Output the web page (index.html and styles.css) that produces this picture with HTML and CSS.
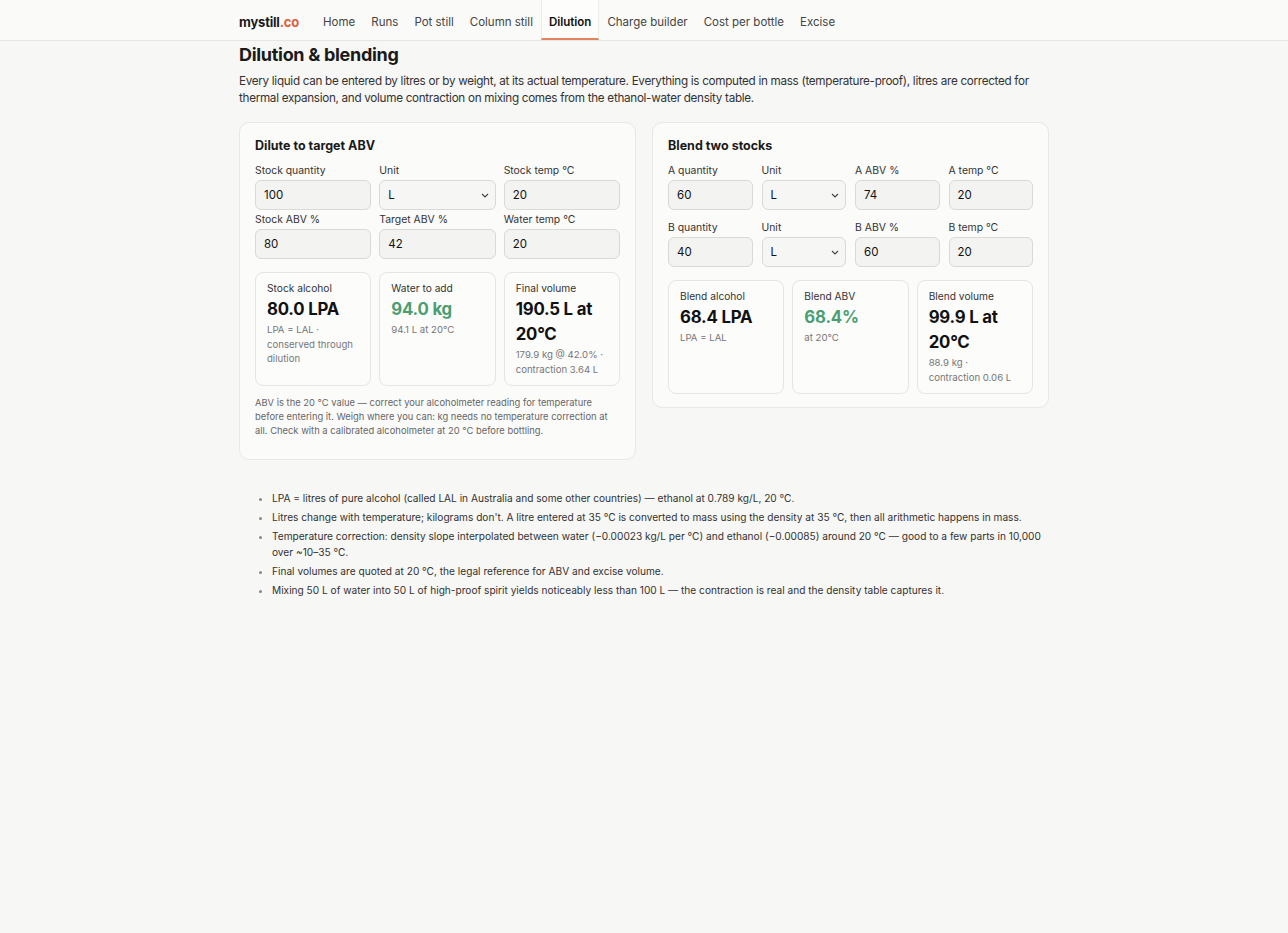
FILE: index.html
```html
<!DOCTYPE html>
<html lang="en">
<head>
  <meta charset="UTF-8" />
  <meta name="viewport" content="width=device-width, initial-scale=1.0" />
  <title>Dilution &amp; blending · mystill.co</title>
  <link rel="stylesheet" href="styles.css">
</head>
<body>
  <nav class="topbar">
    <div class="topbar-inner">
      <a class="logo" href="#">mystill<span>.co</span></a>
      <a class="nav-link" href="#">Home</a>
      <a class="nav-link" href="#">Runs</a>
      <a class="nav-link" href="#">Pot still</a>
      <a class="nav-link" href="#">Column still</a>
      <a class="nav-link active" href="#">Dilution</a>
      <a class="nav-link" href="#">Charge builder</a>
      <a class="nav-link" href="#">Cost per bottle</a>
      <a class="nav-link" href="#">Excise</a>
    </div>
  </nav>

  <main class="page">
    <h1>Dilution &amp; blending</h1>
    <p class="lead">Every liquid can be entered by litres or by weight, at its actual temperature. Everything is computed in mass (temperature-proof), litres are corrected for thermal expansion, and volume contraction on mixing comes from the ethanol-water density table.</p>

    <div class="panels">
      <section class="panel">
        <h2>Dilute to target ABV</h2>
        <div class="fields cols-3">
          <label class="field"><span>Stock quantity</span><input type="text" value="100"></label>
          <label class="field"><span>Unit</span><select><option>L</option><option>kg</option></select></label>
          <label class="field"><span>Stock temp °C</span><input type="text" value="20"></label>
          <label class="field"><span>Stock ABV %</span><input type="text" value="80"></label>
          <label class="field"><span>Target ABV %</span><input type="text" value="42"></label>
          <label class="field"><span>Water temp °C</span><input type="text" value="20"></label>
        </div>
        <div class="results">
          <div class="result">
            <div class="result-label">Stock alcohol</div>
            <div class="result-value">80.0 LPA</div>
            <div class="result-note">LPA = LAL · conserved through dilution</div>
          </div>
          <div class="result">
            <div class="result-label">Water to add</div>
            <div class="result-value good">94.0 kg</div>
            <div class="result-note">94.1 L at 20°C</div>
          </div>
          <div class="result">
            <div class="result-label">Final volume</div>
            <div class="result-value">190.5 L at 20°C</div>
            <div class="result-note">179.9 kg @ 42.0% · contraction 3.64 L</div>
          </div>
        </div>
        <p class="hint">ABV is the 20 °C value — correct your alcoholmeter reading for temperature before entering it. Weigh where you can: kg needs no temperature correction at all. Check with a calibrated alcoholmeter at 20 °C before bottling.</p>
      </section>

      <section class="panel">
        <h2>Blend two stocks</h2>
        <div class="fields cols-4">
          <label class="field"><span>A quantity</span><input type="text" value="60"></label>
          <label class="field"><span>Unit</span><select><option>L</option><option>kg</option></select></label>
          <label class="field"><span>A ABV %</span><input type="text" value="74"></label>
          <label class="field"><span>A temp °C</span><input type="text" value="20"></label>
        </div>
        <div class="fields cols-4">
          <label class="field"><span>B quantity</span><input type="text" value="40"></label>
          <label class="field"><span>Unit</span><select><option>L</option><option>kg</option></select></label>
          <label class="field"><span>B ABV %</span><input type="text" value="60"></label>
          <label class="field"><span>B temp °C</span><input type="text" value="20"></label>
        </div>
        <div class="results">
          <div class="result">
            <div class="result-label">Blend alcohol</div>
            <div class="result-value">68.4 LPA</div>
            <div class="result-note">LPA = LAL</div>
          </div>
          <div class="result">
            <div class="result-label">Blend ABV</div>
            <div class="result-value good">68.4%</div>
            <div class="result-note">at 20°C</div>
          </div>
          <div class="result">
            <div class="result-label">Blend volume</div>
            <div class="result-value">99.9 L at 20°C</div>
            <div class="result-note">88.9 kg · contraction 0.06 L</div>
          </div>
        </div>
      </section>
    </div>

    <ul class="notes">
      <li>LPA = litres of pure alcohol (called LAL in Australia and some other countries) — ethanol at 0.789 kg/L, 20 °C.</li>
      <li>Litres change with temperature; kilograms don't. A litre entered at 35 °C is converted to mass using the density at 35 °C, then all arithmetic happens in mass.</li>
      <li>Temperature correction: density slope interpolated between water (−0.00023 kg/L per °C) and ethanol (−0.00085) around 20 °C — good to a few parts in 10,000 over ~10–35 °C.</li>
      <li>Final volumes are quoted at 20 °C, the legal reference for ABV and excise volume.</li>
      <li>Mixing 50 L of water into 50 L of high-proof spirit yields noticeably less than 100 L — the contraction is real and the density table captures it.</li>
    </ul>
  </main>
</body>
</html>
```

FILE: styles.css
```css
* {
  box-sizing: border-box;
  margin: 0;
  padding: 0;
}
body {
  background: #f7f7f5;
  color: #1a1a1a;
  font-family: Inter, "Noto Sans", sans-serif;
  font-size: 12px;
}
a {
  text-decoration: none;
  color: inherit;
}

/* top navigation */
.topbar {
  background: #fafaf9;
  border-bottom: 1px solid #e6e6e3;
}
.topbar-inner {
  max-width: 810px;
  margin: 0 auto;
  height: 40px;
  display: flex;
  align-items: stretch;
}
.logo {
  display: flex;
  align-items: center;
  padding-top: 3px;
  font-weight: 700;
  font-size: 13px;
  letter-spacing: -0.2px;
  margin-right: 16px;
}
.logo span {
  color: #d9623b;
}
.nav-link {
  display: flex;
  align-items: center;
  padding: 5px 7px 0;
  color: #444;
  font-size: 11.5px;
  border-left: 1px solid transparent;
  border-right: 1px solid transparent;
  border-bottom: 2px solid transparent;
}
.nav-link.active {
  color: #111;
  font-weight: 600;
  background: #fdfdfc;
  border-left-color: #ececea;
  border-right-color: #ececea;
  border-bottom-color: #e0835e;
}

/* page */
.page {
  max-width: 810px;
  margin: 0 auto;
  padding-top: 2px;
}
h1 {
  font-size: 18px;
  font-weight: 700;
  letter-spacing: -0.3px;
  line-height: 24px;
}
.lead {
  margin-top: 6px;
  font-size: 11.7px;
  letter-spacing: -0.3px;
  line-height: 17px;
  color: #333;
}
.panels {
  display: grid;
  grid-template-columns: 1fr 1fr;
  gap: 16px;
  align-items: start;
  margin-top: 15px;
}
.panel {
  background: #fbfbfa;
  border: 1px solid #e8e8e5;
  border-radius: 10px;
  padding: 15px 15px 13px;
}
.panel h2 {
  font-size: 12.5px;
  font-weight: 700;
  line-height: 16px;
  margin-bottom: 10px;
}

/* form fields */
.fields {
  display: grid;
  column-gap: 8px;
  row-gap: 3px;
}
.fields + .fields {
  margin-top: 11px;
}
.cols-3 {
  grid-template-columns: repeat(3, 1fr);
}
.cols-4 {
  grid-template-columns: repeat(4, 1fr);
  column-gap: 9px;
}
.field {
  display: flex;
  flex-direction: column;
}
.field span {
  font-size: 10.4px;
  line-height: 13px;
  color: #333;
  margin-bottom: 3px;
}
.field input,
.field select {
  height: 30px;
  border: 1px solid #d9d9d6;
  border-radius: 6px;
  background: #f3f3f1;
  font-family: inherit;
  font-size: 11.5px;
  color: #111;
  padding: 0 8px;
  width: 100%;
}
.field select {
  appearance: none;
  -webkit-appearance: none;
  background: #f6f6f4 url("data:image/svg+xml,%3Csvg xmlns='http://www.w3.org/2000/svg' width='8' height='5' viewBox='0 0 8 5'%3E%3Cpath d='M1 1l3 3 3-3' fill='none' stroke='%23444' stroke-width='1.1'/%3E%3C/svg%3E") no-repeat right 6px center;
  padding-left: 8px;
}

/* computed results */
.results {
  display: grid;
  grid-template-columns: repeat(3, 1fr);
  gap: 8px;
  margin-top: 13px;
}
.result {
  border: 1px solid #e5e5e2;
  border-radius: 8px;
  background: #fcfcfb;
  padding: 9px 12px 8px 11px;
  min-height: 112px;
}
.result-label {
  font-size: 10.2px;
  line-height: 13px;
  color: #333;
}
.result-value {
  font-size: 16.8px;
  font-weight: 700;
  line-height: 25px;
  letter-spacing: -0.2px;
  color: #111;
  margin-top: 2px;
}
.result-value.good {
  color: #4b9e72;
}
.result-note {
  font-size: 9.6px;
  line-height: 14.5px;
  color: #777;
  margin-top: 1px;
}
.hint {
  margin-top: 10px;
  margin-bottom: 8px;
  font-size: 9.4px;
  line-height: 14px;
  color: #666;
}

/* footnotes */
.notes {
  margin-top: 30px;
  padding-left: 33px;
  font-size: 10.15px;
  line-height: 16px;
  color: #333;
}
.notes li {
  margin-bottom: 3px;
}
.notes li::marker {
  color: #888;
}
```
